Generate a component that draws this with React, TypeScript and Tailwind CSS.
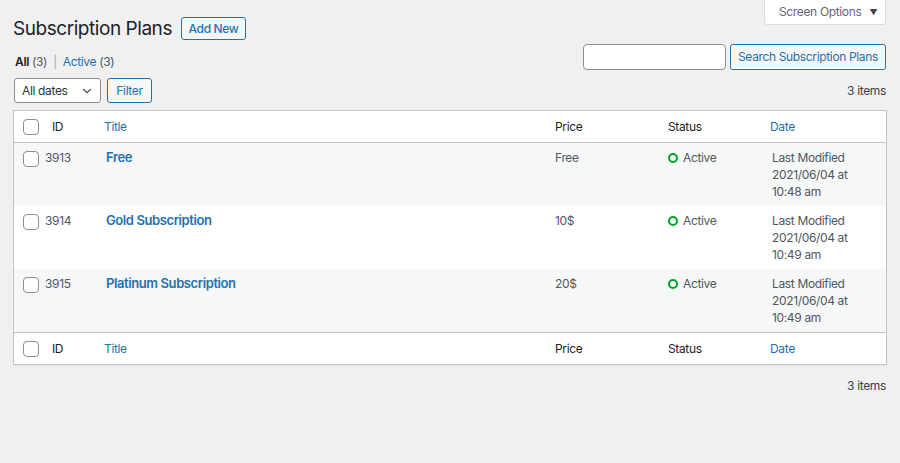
import { ChevronDown } from "lucide-react";

const plans = [
  { id: 3913, title: "Free", price: "Free", time: "10:48 am" },
  { id: 3914, title: "Gold Subscription", price: "10$", time: "10:49 am" },
  { id: 3915, title: "Platinum Subscription", price: "20$", time: "10:49 am" },
];

const cols = "grid grid-cols-[31px_59px_451px_113px_102px_1fr]";

function Checkbox() {
  return <span className="block h-4 w-4 rounded-[4px] border border-[#8c8f94] bg-white" />;
}

function HeaderRow({ top }: { top?: boolean }) {
  return (
    <div
      className={`${cols} h-[32px] items-center bg-white text-[#1d2327] ${
        top ? "border-b border-[#c3c4c7]" : "border-t border-[#c3c4c7]"
      }`}
    >
      <div className="pl-[9px]">
        <Checkbox />
      </div>
      <div className="pl-[7px]">ID</div>
      <div className="text-[#2271b1]">Title</div>
      <div>Price</div>
      <div>Status</div>
      <div className="text-[#2271b1]">Date</div>
    </div>
  );
}

export default function App() {
  return (
    <div className="min-h-[463px] bg-[#f0f0f1] px-[13px] font-['Inter',sans-serif] text-[12px] leading-[16px] tracking-[-0.35px] text-[#3c434a]">
      <div className="flex justify-end pr-[1px]">
        <div className="flex h-[25px] w-[122px] items-center gap-[8px] rounded-b-[3px] border border-t-0 border-[#dcdcde] bg-white pl-[14px] text-[#646970]">
          Screen Options
          <span className="text-[8px] text-[#3c434a]">▼</span>
        </div>
      </div>

      <div className="-mt-[8px] flex h-[23px] items-center gap-[9px]">
        <h1 className="text-[19px] leading-[23px] tracking-[-0.45px] text-[#1d2327]">Subscription Plans</h1>
        <span className="flex h-[23px] w-[65px] items-center justify-center rounded-[3px] border border-[#2271b1] bg-[#f6f7f7] font-medium text-[#2271b1]">
          Add New
        </span>
      </div>

      <div className="mt-[4px] flex h-[26px] items-end justify-between">
        <div className="pl-[2px] text-[#50575e]">
          <span className="font-semibold text-[#1d2327]">All</span> (3)
          <span className="mx-[6px] text-[#a7aaad]">|</span>
          <span className="text-[#2271b1]">Active</span> (3)
        </div>
        <div className="flex gap-[4px] pr-[1px]">
          <span className="h-[26px] w-[143px] rounded-[4px] border border-[#8c8f94] bg-white" />
          <span className="flex h-[26px] w-[156px] items-center justify-center rounded-[3px] border border-[#2271b1] bg-[#f6f7f7] text-[#2271b1]">
            Search Subscription Plans
          </span>
        </div>
      </div>

      <div className="mt-[8px] flex h-[25px] items-center justify-between">
        <div className="flex gap-[6px] pl-[1px]">
          <span className="flex h-[25px] w-[87px] items-center justify-between rounded-[3px] border border-[#8c8f94] bg-white pl-[7px] pr-[6px] text-[#2c3338]">
            All dates
            <ChevronDown size={14} strokeWidth={2} className="text-[#50575e]" />
          </span>
          <span className="flex h-[25px] w-[45px] items-center justify-center rounded-[3px] border border-[#2271b1] bg-[#f6f7f7] text-[#2271b1]">
            Filter
          </span>
        </div>
        <span className="pr-[1px]">3 items</span>
      </div>

      <div className="mt-[7px] border border-[#c3c4c7] bg-white shadow-[0_1px_1px_rgba(0,0,0,0.04)]">
        <HeaderRow top />
        {plans.map((p, i) => (
          <div
            key={p.id}
            className={`${cols} h-[63px] items-start pt-[6px] leading-[17px] ${
              i % 2 === 0 ? "bg-[#f6f7f7]" : "bg-white"
            }`}
          >
            <div className="pl-[9px] pt-[2px]">
              <Checkbox />
            </div>
            <div className="text-[#50575e]">{p.id}</div>
            <div className="pl-[2px] text-[13px] font-semibold tracking-[-0.4px] text-[#2271b1]">{p.title}</div>
            <div className="text-[#50575e]">{p.price}</div>
            <div className="flex items-center gap-[5px] text-[#50575e]">
              <span className="h-[10px] w-[10px] rounded-full border-2 border-[#00a32a]" />
              Active
            </div>
            <div className="pl-[2px] text-[#50575e]">
              <div>Last Modified</div>
              <div>2021/06/04 at</div>
              <div>{p.time}</div>
            </div>
          </div>
        ))}
        <HeaderRow />
      </div>

      <div className="mt-[13px] flex justify-end pr-[1px]">3 items</div>
    </div>
  );
}
